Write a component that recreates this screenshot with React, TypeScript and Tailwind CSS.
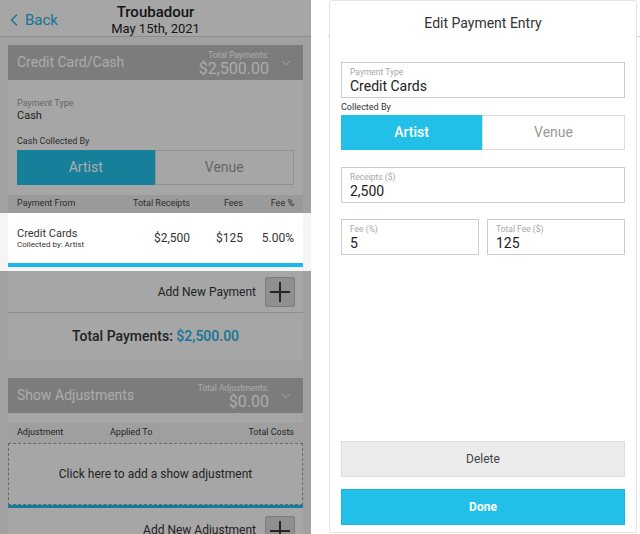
import { ChevronLeft, ChevronDown } from "lucide-react";

const font = { fontFamily: "Roboto, 'Noto Sans', sans-serif" };

const PlusButton = () => (
  <div className="w-[30px] h-[30px] rounded-[2px] bg-[#d6d6d6] border border-[#bdbdbd] flex items-center justify-center">
    <svg width="22" height="22" viewBox="0 0 22 22">
      <path d="M11 1v20M1 11h20" stroke="#3a3a3a" strokeWidth="2" />
    </svg>
  </div>
);

const CardHeader = ({ title, label, amount }: { title: string; label: string; amount: string }) => (
  <div className="h-[35px] bg-[#b9b9b9] flex items-center pl-[9px] pr-[10px] text-white">
    <div className="flex-1 text-[14px]">{title}</div>
    <div className="flex flex-col items-end mr-[10px] mt-[1px]">
      <span className="text-[8.5px] leading-[10px]">{label}</span>
      <span className="text-[16px] leading-[17px]">{amount}</span>
    </div>
    <ChevronDown size={14} strokeWidth={1.5} />
  </div>
);

const Field = ({ label, value, className = "" }: { label: string; value: string; className?: string }) => (
  <div className={"h-[36px] border border-[#cccccc] px-[8px] pt-[4px] " + className}>
    <div className="text-[8.5px] leading-[10px] text-[#a8a8a8]">{label}</div>
    <div className="text-[14px] leading-[18px] text-[#222]">{value}</div>
  </div>
);

const EventScreen = () => (
  <div className="relative w-[311px] h-[534px] overflow-hidden bg-[#f1f1f1] shrink-0">
    {/* header */}
    <div className="relative h-[37px] bg-[#f8f8f8] border-b border-[#d2d2d2]">
      <div className="absolute left-[4px] top-[9px] flex items-center text-[#22aee0]">
        <ChevronLeft size={20} strokeWidth={1.75} />
        <span className="text-[15px] ml-[1px]">Back</span>
      </div>
      <div className="flex flex-col items-center pt-[3px] text-[#222]">
        <span className="text-[15px] leading-[18px] font-medium">Troubadour</span>
        <span className="text-[13px] leading-[15px]">May 15th, 2021</span>
      </div>
    </div>

    <div className="px-2 pt-[8px]">
      {/* credit card / cash */}
      <CardHeader title="Credit Card/Cash" label="Total Payments:" amount="$2,500.00" />
      <div className="bg-[#f8f8f8]">
        <div className="px-[9px] pt-[18px]">
          <div className="text-[9px] leading-[11px] text-[#9a9a9a]">Payment Type</div>
          <div className="text-[11px] leading-[14px] text-[#333]">Cash</div>
          <div className="mt-[13px] text-[9px] leading-[11px] text-[#444]">Cash Collected By</div>
          <div className="mt-[3px] h-[35px] flex">
            <div className="flex-1 bg-[#22bfe8] text-white text-[14px] flex items-center justify-center">Artist</div>
            <div className="flex-1 border border-[#d7d7d7] text-[#999] text-[14px] flex items-center justify-center">Venue</div>
          </div>
        </div>
        <div className="mt-[10px] h-[18px] bg-[#e6e6e6] flex items-center px-[9px] text-[9px] text-[#444]">
          <span className="flex-1">Payment From</span>
          <span className="w-[80px] text-right">Total Receipts</span>
          <span className="w-[53px] text-right">Fees</span>
          <span className="w-[51px] text-right">Fee %</span>
        </div>
      </div>

      {/* highlighted row */}
      <div className="relative z-20 -mx-2 px-2 pb-[4px] bg-[#f5f5f5]">
        <div className="bg-white h-[50px] flex items-center px-[9px] text-[#333]">
          <div className="flex-1 flex flex-col mt-[1px]">
            <span className="text-[11px] leading-[13px]">Credit Cards</span>
            <span className="text-[8px] leading-[10px]">Collected by: Artist</span>
          </div>
          <span className="w-[80px] text-right text-[12px]">$2,500</span>
          <span className="w-[53px] text-right text-[12px]">$125</span>
          <span className="w-[51px] text-right text-[12px]">5.00%</span>
        </div>
        <div className="h-[4px] bg-[#1ab9ec]" />
      </div>

      <div className="bg-[#f8f8f8]">
        <div className="h-[42px] flex items-center justify-end gap-[9px] pr-[8px] border-b border-[#d6d6d6]">
          <span className="text-[12px] text-[#333]">Add New Payment</span>
          <PlusButton />
        </div>
        <div className="h-[47px] flex items-center justify-center text-[14px] font-medium text-[#333]">
          Total Payments:&nbsp;<span className="text-[#22aee0]">$2,500.00</span>
        </div>
      </div>

      {/* show adjustments */}
      <div className="mt-[18px]">
        <CardHeader title="Show Adjustments" label="Total Adjustments:" amount="$0.00" />
      </div>
      <div className="bg-[#f8f8f8] pt-[10px]">
        <div className="h-[20px] bg-[#eeeeee] flex items-center px-[9px] text-[9px] text-[#333]">
          <span className="w-[93px]">Adjustment</span>
          <span className="flex-1">Applied To</span>
          <span>Total Costs</span>
        </div>
        <div className="h-[62px] border border-dashed border-[#9a9a9a] flex items-center justify-center text-[12px] text-[#333]">
          Click here to add a show adjustment
        </div>
        <div className="h-[3px] bg-[#1ab9ec]" />
        <div className="h-[42px] flex items-start pt-[8px] justify-end gap-[9px] pr-[8px]">
          <span className="text-[12px] leading-[14px] text-[#333] mt-[7px]">Add New Adjustment</span>
          <PlusButton />
        </div>
      </div>
    </div>

    <div className="absolute inset-0 z-10 bg-black/[0.33]" />
  </div>
);

const EditScreen = () => (
  <div className="relative flex-1 h-[534px] bg-white ml-[17px]">
    <div className="h-[37px] border-b border-[#d8d8d8]" />
    <div className="absolute top-0 left-[1px] right-[3px] bottom-[1px] bg-white border border-[#e4e4e4] rounded-[3px] flex flex-col px-[11px] pb-[7px]">
      <div className="h-[44px] flex items-center justify-center text-[14px] text-[#333]">Edit Payment Entry</div>
      <Field className="mt-[17px]" label="Payment Type" value="Credit Cards" />
      <div className="mt-[3px] text-[9px] leading-[12px] text-[#333]">Collected By</div>
      <div className="mt-[2px] h-[35px] flex">
        <div className="flex-1 bg-[#22bfe8] text-white text-[14px] font-medium flex items-center justify-center">Artist</div>
        <div className="flex-1 border border-[#dcdcdc] text-[#999] text-[14px] flex items-center justify-center">Venue</div>
      </div>
      <Field className="mt-[17px]" label="Receipts ($)" value="2,500" />
      <div className="mt-[16px] flex gap-[8px]">
        <Field className="flex-1" label="Fee (%)" value="5" />
        <Field className="flex-1" label="Total Fee ($)" value="125" />
      </div>
      <div className="flex-1" />
      <div className="h-[36px] bg-[#ebebeb] border border-[#dddddd] flex items-center justify-center text-[12px] text-[#444]">
        Delete
      </div>
      <div className="mt-[12px] h-[36px] bg-[#22bfe8] border border-[#1ab5e4] flex items-center justify-center text-[12px] text-white font-bold">
        Done
      </div>
    </div>
  </div>
);

export default function App() {
  return (
    <div className="w-[640px] h-[534px] flex bg-white overflow-hidden" style={font}>
      <EventScreen />
      <EditScreen />
    </div>
  );
}
